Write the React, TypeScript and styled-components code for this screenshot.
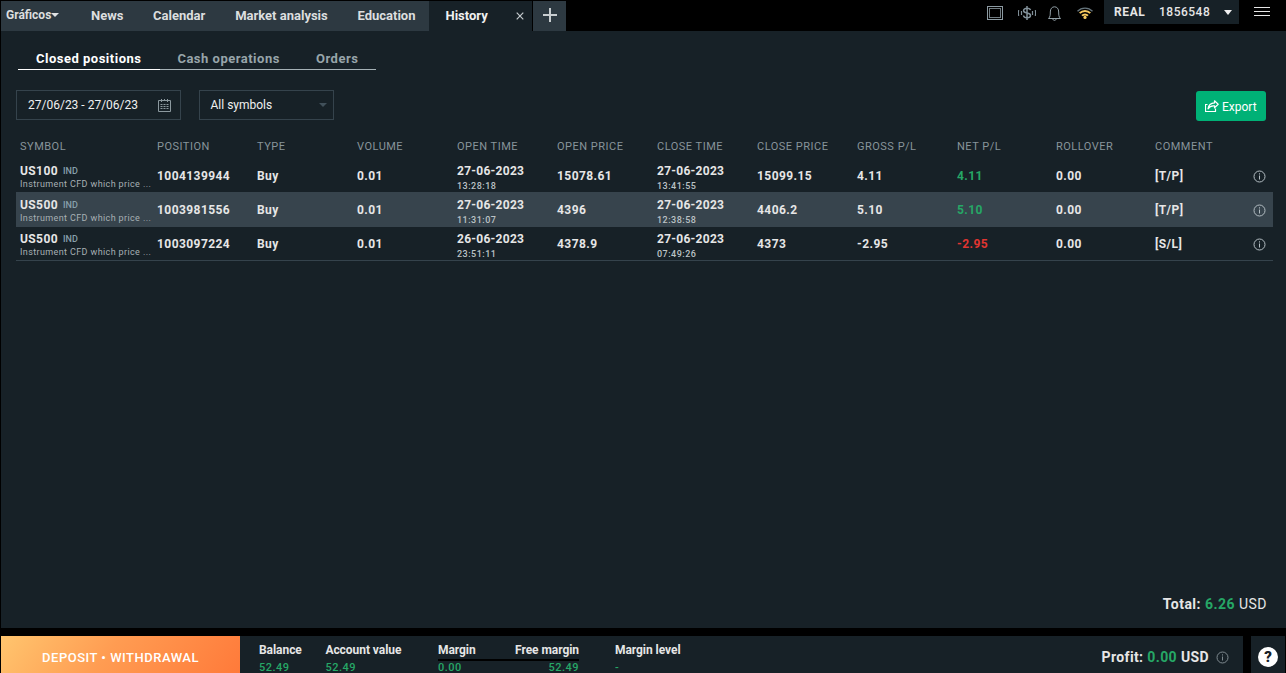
import React from "react";
import styled, { createGlobalStyle, css } from "styled-components";

const color = {
  panel: "#172127",
  tab: "#2d3941",
  line: "#35434c",
  text: "#e6e6e6",
  muted: "#87949a",
  green: "#26a766",
  red: "#e03531",
};

const GlobalStyle = createGlobalStyle`
  * { box-sizing: border-box; }
  body {
    margin: 0;
    background: #000;
    color: ${color.text};
    font-family: Roboto, "Liberation Sans", sans-serif;
    font-size: 12px;
    overflow: hidden;
  }
  svg { display: block; flex: none; }
`;

const Screen = styled.div`
  width: 1286px;
  height: 673px;
  padding-left: 1px;
  display: flex;
  flex-direction: column;
  overflow: hidden;
  white-space: nowrap;
`;

const TopBar = styled.header`
  height: 31px;
  display: flex;
  justify-content: space-between;
`;

const Tabs = styled.nav`
  display: flex;
  margin-top: 1px;
`;

const Tab = styled.div<{ $width: number; $pad: number; $active?: boolean }>`
  width: ${(p) => p.$width}px;
  padding-left: ${(p) => p.$pad}px;
  padding-bottom: 1px;
  height: 30px;
  display: flex;
  align-items: center;
  font-size: 13px;
  font-weight: 700;
  line-height: 15px;
  background: ${(p) => (p.$active ? color.panel : color.tab)};
  color: ${(p) => (p.$active ? "#f0f0f0" : "#dcdedf")};
`;

const ChartsTab = styled(Tab)`
  font-size: 12px;
  letter-spacing: 0;
  padding-bottom: 2px;
`;

const CloseIcon = styled.svg`
  margin-left: 28px;
`;

const AddTab = styled.div`
  width: 33px;
  height: 30px;
  margin-left: 1px;
  padding-bottom: 2px;
  display: flex;
  align-items: center;
  justify-content: center;
  background: ${color.tab};
`;

const Status = styled.div`
  display: flex;
  align-items: flex-start;
  width: 299px;
`;

const StatusIcon = styled.div<{ $left: number; $top: number }>`
  margin-left: ${(p) => p.$left}px;
  margin-top: ${(p) => p.$top}px;
`;

const Account = styled.div`
  width: 135px;
  height: 24px;
  margin-left: 11px;
  padding: 0 7px 0 10px;
  display: flex;
  align-items: center;
  background: ${color.panel};
  font-size: 12px;
  letter-spacing: 0.5px;
`;

const AccountKind = styled.span`
  width: 45px;
  font-weight: 700;
  letter-spacing: 0.6px;
`;

const AccountId = styled.span`
  flex: 1;
  font-weight: 500;
`;

const Panel = styled.main`
  width: 1285px;
  height: 597px;
  padding: 16px 13px 0 15px;
  display: flex;
  flex-direction: column;
  background: ${color.panel};
`;

const SubTabs = styled.div`
  display: flex;
  height: 23px;
  margin-left: 2px;
`;

const SubTab = styled.div<{ $width: number; $pad: number; $active?: boolean }>`
  width: ${(p) => p.$width}px;
  padding: 4px 0 0 ${(p) => p.$pad}px;
  font-size: 13px;
  line-height: 15px;
  font-weight: 700;
  letter-spacing: 0.5px;
  color: ${(p) => (p.$active ? "#fff" : "#98a5aa")};
  border-bottom: 1px solid ${(p) => (p.$active ? "#fff" : "#a5b1b6")};
`;

const Filters = styled.div`
  display: flex;
  margin-top: 20px;
  height: 31px;
`;

const Field = styled.div<{ $width: number; $pad: number }>`
  width: ${(p) => p.$width}px;
  height: 30px;
  padding: 0 6px 0 ${(p) => p.$pad}px;
  margin-right: 18px;
  display: flex;
  align-items: center;
  justify-content: space-between;
  border: 1px solid ${color.line};
  font-size: 12px;
  color: #f0f0f0;
`;

const ExportButton = styled.button`
  width: 70px;
  height: 30px;
  margin: 1px 7px 0 auto;
  padding: 0 0 0 9px;
  display: flex;
  align-items: center;
  gap: 3px;
  border: 0;
  border-radius: 3px;
  background: #00b176;
  color: #fff;
  font: 400 12px Roboto, sans-serif;
`;

const ExportLabel = styled.span`
  padding-top: 2px;
`;

const gridColumns = css`
  display: grid;
  grid-template-columns: 137px repeat(8, 100px) 99px 99px 98px 1fr;
  padding-left: 4px;
`;

const Table = styled.div`
  margin-top: 15px;
  border-bottom: 1px solid ${color.line};
`;

const HeadRow = styled.div`
  ${gridColumns}
  height: 22px;
  align-items: center;
  padding-bottom: 1px;
  font-size: 11px;
  letter-spacing: 0.5px;
  color: ${color.muted};
`;

const Cell = styled.div<{ $tone?: "gain" | "loss" }>`
  padding-top: 11px;
  color: ${(p) =>
    p.$tone === "gain" ? color.green : p.$tone === "loss" ? color.red : "inherit"};
`;

const StackCell = styled.div`
  padding-top: 6px;
  letter-spacing: 0.27px;
`;

const InfoCell = styled.div`
  padding: 12px 0 0 0;
`;

const Row = styled.div<{ $height: number; $selected?: boolean; $lift: number }>`
  ${gridColumns}
  height: ${(p) => p.$height}px;
  font-size: 12px;
  line-height: 14px;
  font-weight: 700;
  letter-spacing: 0.43px;
  background: ${(p) => (p.$selected ? "#37444d" : "transparent")};
  ${Cell}, ${StackCell}, ${InfoCell} { margin-top: -${(p) => p.$lift}px; }
`;

const SymbolName = styled.div`
  display: flex;
  letter-spacing: 0.4px;
`;

const Badge = styled.span`
  margin-left: 5px;
  font-size: 9px;
  line-height: 15px;
  font-weight: 500;
  letter-spacing: 0;
  color: #87a0ac;
`;

const Description = styled.div`
  font-size: 9px;
  line-height: 11px;
  font-weight: 400;
  letter-spacing: 0.38px;
  color: #a7b0b4;
`;

const Time = styled.div`
  margin-top: 2px;
  font-size: 9px;
  line-height: 12px;
  font-weight: 500;
  letter-spacing: 0.5px;
  color: #bcc3c6;
`;

const Total = styled.div`
  margin: auto 6px 16px auto;
  font-size: 14px;
  line-height: 16px;
  font-weight: 400;
  letter-spacing: 0.48px;
  b { font-weight: 700; }
  em { font-style: normal; font-weight: 700; color: ${color.green}; }
`;

const Footer = styled.footer`
  display: flex;
  margin-top: 8px;
  height: 37px;
`;

const Deposit = styled.div`
  width: 239px;
  height: 37px;
  padding: 6px 0 0 0;
  display: flex;
  align-items: center;
  justify-content: center;
  font-size: 13px;
  font-weight: 500;
  letter-spacing: 0.5px;
  color: #fff;
  background: linear-gradient(125deg, #ffc56e 0%, #ff9c52 45%, #ff7a3a 100%);
`;

const Summary = styled.div`
  width: 1003px;
  padding-left: 19px;
  display: flex;
  background: ${color.panel};
`;

const metricText = css`
  padding-top: 7px;
  font-size: 12px;
  font-weight: 700;
  letter-spacing: -0.05px;
  line-height: 15px;
`;

const Metric = styled.div<{ $width: number }>`
  ${metricText}
  width: ${(p) => p.$width}px;
`;

const MetricValue = styled.div`
  margin-top: 5px;
  font-size: 11px;
  line-height: 10px;
  font-weight: 500;
  letter-spacing: 0.5px;
  color: ${color.green};
`;

const MarginPair = styled.div`
  ${metricText}
  width: 141px;
  margin-right: 36px;
`;

const Spread = styled.div`
  display: flex;
  justify-content: space-between;
`;

const MarginBar = styled.div`
  height: 2px;
  margin: 1px 0 2px;
  background: #000;
`;

const MarginValues = styled(Spread)`
  font-size: 11px;
  line-height: 10px;
  font-weight: 500;
  letter-spacing: 0.5px;
  color: ${color.green};
`;

const Profit = styled.div`
  margin-left: auto;
  padding: 5px 14px 0 0;
  display: flex;
  align-items: center;
  gap: 4px;
  font-size: 14px;
  font-weight: 700;
  letter-spacing: 0.36px;
  em { font-style: normal; color: ${color.green}; }
  svg { margin-left: 3px; }
`;

const Help = styled.div`
  width: 34px;
  height: 37px;
  margin-left: 8px;
  padding: 11px 0 0 7px;
  background: ${color.panel};
`;

const HelpDisc = styled.div`
  width: 20px;
  height: 20px;
  border-radius: 50%;
  background: #fff;
  color: ${color.panel};
  font-size: 15px;
  line-height: 20px;
  font-weight: 900;
  text-align: center;
`;

const InfoIcon = ({ stroke = "#b3bdc2" }: { stroke?: string }) => (
  <svg width="13" height="13" viewBox="0 0 13 13" fill="none" stroke={stroke}>
    <circle cx="6.500" cy="6.500" r="5.500" />
    <path d="M6.500 5.500v4M6.500 3.300v1.200" />
  </svg>
);

const headings = [
  "SYMBOL", "POSITION", "TYPE", "VOLUME", "OPEN TIME", "OPEN PRICE", "CLOSE TIME",
  "CLOSE PRICE", "GROSS P/L", "NET P/L", "ROLLOVER", "COMMENT",
];

const trades = [
  { symbol: "US100", id: "1004139944", open: ["27-06-2023", "13:28:18"], openPrice: "15078.61", close: ["27-06-2023", "13:41:55"], closePrice: "15099.15", pl: "4.11", comment: "[T/P]", height: 34 },
  { symbol: "US500", id: "1003981556", open: ["27-06-2023", "11:31:07"], openPrice: "4396", close: ["27-06-2023", "12:38:58"], closePrice: "4406.2", pl: "5.10", comment: "[T/P]", height: 35 },
  { symbol: "US500", id: "1003097224", open: ["26-06-2023", "23:51:11"], openPrice: "4378.9", close: ["27-06-2023", "07:49:26"], closePrice: "4373", pl: "-2.95", comment: "[S/L]", height: 33 },
];

const Stamp = ({ value }: { value: string[] }) => (
  <StackCell>
    <div>{value[0]}</div>
    <Time>{value[1]}</Time>
  </StackCell>
);

export default function App() {
  return (
    <Screen>
      <GlobalStyle />
      <TopBar>
        <Tabs>
          <ChartsTab $width={75} $pad={5}>
            Gráficos
            <svg width="8" height="4" viewBox="0 0 8 4"><path d="M0 0h8L4 4z" fill="#e0e2e3" /></svg>
          </ChartsTab>
          <Tab $width={62} $pad={15}>News</Tab>
          <Tab $width={82} $pad={15}>Calendar</Tab>
          <Tab $width={122} $pad={15.2}>Market analysis</Tab>
          <Tab $width={87} $pad={15.5}>Education</Tab>
          <Tab $width={103} $pad={16.5} $active>
            History
            <CloseIcon width="8" height="8" viewBox="0 0 8 8" stroke="#c4cacd" strokeWidth="1.2">
              <path d="M.7.7l6.6 6.6M7.3.7L.7 7.3" />
            </CloseIcon>
          </Tab>
          <AddTab>
            <svg width="14" height="14" viewBox="0 0 14 14" fill="#c8cdd0"><path d="M6 0h2v6h6v2H8v6H6V8H0V6h6z" /></svg>
          </AddTab>
        </Tabs>
        <Status>
          <StatusIcon $left={0} $top={6}>
            <svg width="16" height="14" viewBox="0 0 16 14" fill="none" stroke="#8d9ba3">
              <rect x=".5" y=".5" width="15" height="13" />
              <rect x="2.5" y="2.5" width="11" height="9" strokeOpacity=".8" />
            </svg>
          </StatusIcon>
          <StatusIcon $left={15} $top={6}>
            <svg width="18" height="14" viewBox="0 0 18 14" fill="none" stroke="#82919a" strokeWidth="1.5">
              <path d="M9 0v14M12.500 4.200C12.200 2.800 10.800 2.200 9 2.200S5.600 3 5.600 4.500 7 6.700 9 7s3.500 1 3.500 2.500S11 11.800 9 11.800 5.700 11 5.500 9.500" />
              <path d="M3.500 5v4M.7 4.200Q0 7 .7 9.800M14.500 5v4M17.300 4.200Q18 7 17.300 9.800" strokeWidth="1.200" />
            </svg>
          </StatusIcon>
          <StatusIcon $left={12} $top={6}>
            <svg width="13" height="15" viewBox="0 0 13 15" fill="none" stroke="#93a1a8">
              <path d="M.5 12.500C2.300 10.800 2.300 9 2.300 6 2.300 2.800 4 .8 6.500.8s4.200 2 4.200 5.200c0 3 0 4.800 1.800 6.500zM4.800 12.600c0 2.400 3.400 2.400 3.400 0" />
            </svg>
          </StatusIcon>
          <StatusIcon $left={16} $top={7}>
            <svg width="16" height="12" viewBox="0 0 16 12" fill="none" strokeWidth="1.900">
              <path d="M.5 4.200C4.600 0 11.400 0 15.500 4.200" stroke="#66757d" strokeWidth="1.300" />
              <path d="M2.700 6.200c2.900-3 7.700-3 10.600 0M5 8.700c1.700-1.700 4.300-1.700 6 0" stroke="#f8cb60" />
              <circle cx="8" cy="10.400" r="1.600" fill="#f8cb60" />
            </svg>
          </StatusIcon>
          <Account>
            <AccountKind>REAL</AccountKind>
            <AccountId>1856548</AccountId>
            <svg width="8" height="5" viewBox="0 0 8 5"><path d="M0 0h8L4 5z" fill="#f0f0f0" /></svg>
          </Account>
          <StatusIcon $left={15} $top={7}>
            <svg width="16" height="9" viewBox="0 0 16 9" fill="#e6e6e6"><path d="M0 0h16v1H0zM0 4h16v1H0zM0 8h16v1H0z" /></svg>
          </StatusIcon>
        </Status>
      </TopBar>

      <Panel>
        <SubTabs>
          <SubTab $width={142} $pad={18} $active>Closed positions</SubTab>
          <SubTab $width={139} $pad={17.4}>Cash operations</SubTab>
          <SubTab $width={77} $pad={17}>Orders</SubTab>
        </SubTabs>

        <Filters>
          <Field $width={165} $pad={11}>
            27/06/23 - 27/06/23
            <svg width="19" height="13" viewBox="0 0 19 13" fill="none" stroke="#8c999f">
              <path d="M3.500 1.500h12v11h-12zM6.500 0v3M12.500 0v3M9.500 0v2" />
              <path d="M5.500 5.500h8M5.500 7.500h8M5.500 9.500h8" strokeDasharray="2 1" strokeWidth="1" />
            </svg>
          </Field>
          <Field $width={135} $pad={10.5}>
            All symbols
            <svg width="8" height="4" viewBox="0 0 8 4"><path d="M0 0h8L4 4z" fill="#41505a" /></svg>
          </Field>
          <ExportButton>
            <svg width="14" height="12" viewBox="0 0 14 12" fill="none" stroke="#fff">
              <path d="M2.500 4.500h-2v7h10V8.500M9.500 .8L13.200 4.300 9.500 7.800V5.900C7 5.600 4.500 6.500 3 8.800 3.500 5.500 6 3.200 9.500 2.900z" strokeWidth="1.200" strokeLinejoin="round" />
            </svg>
            <ExportLabel>Export</ExportLabel>
          </ExportButton>
        </Filters>

        <Table>
          <HeadRow>
            {headings.map((h) => <span key={h}>{h}</span>)}
          </HeadRow>
          {trades.map((t, i) => (
            <Row key={t.id} $height={t.height} $selected={i === 1} $lift={i === 2 ? 1 : 0}>
              <StackCell>
                <SymbolName>{t.symbol}<Badge>IND</Badge></SymbolName>
                <Description>Instrument CFD which price ...</Description>
              </StackCell>
              <Cell>{t.id}</Cell>
              <Cell>Buy</Cell>
              <Cell>0.01</Cell>
              <Stamp value={t.open} />
              <Cell>{t.openPrice}</Cell>
              <Stamp value={t.close} />
              <Cell>{t.closePrice}</Cell>
              <Cell>{t.pl}</Cell>
              <Cell $tone={t.pl.startsWith("-") ? "loss" : "gain"}>{t.pl}</Cell>
              <Cell>0.00</Cell>
              <Cell>{t.comment}</Cell>
              <InfoCell><InfoIcon /></InfoCell>
            </Row>
          ))}
        </Table>

        <Total><b>Total:</b> <em>6.26</em> USD</Total>
      </Panel>

      <Footer>
        <Deposit>DEPOSIT • WITHDRAWAL</Deposit>
        <Summary>
          <Metric $width={66.400}>Balance<MetricValue>52.49</MetricValue></Metric>
          <Metric $width={112.600}>Account value<MetricValue>52.49</MetricValue></Metric>
          <MarginPair>
            <Spread><span>Margin</span><span>Free margin</span></Spread>
            <MarginBar />
            <MarginValues><span>0.00</span><span>52.49</span></MarginValues>
          </MarginPair>
          <Metric $width={80}>Margin level<MetricValue>-</MetricValue></Metric>
          <Profit>
            <span>Profit:</span><em>0.00</em><span>USD</span>
            <InfoIcon stroke="#7f8a90" />
          </Profit>
        </Summary>
        <Help><HelpDisc>?</HelpDisc></Help>
      </Footer>
    </Screen>
  );
}
